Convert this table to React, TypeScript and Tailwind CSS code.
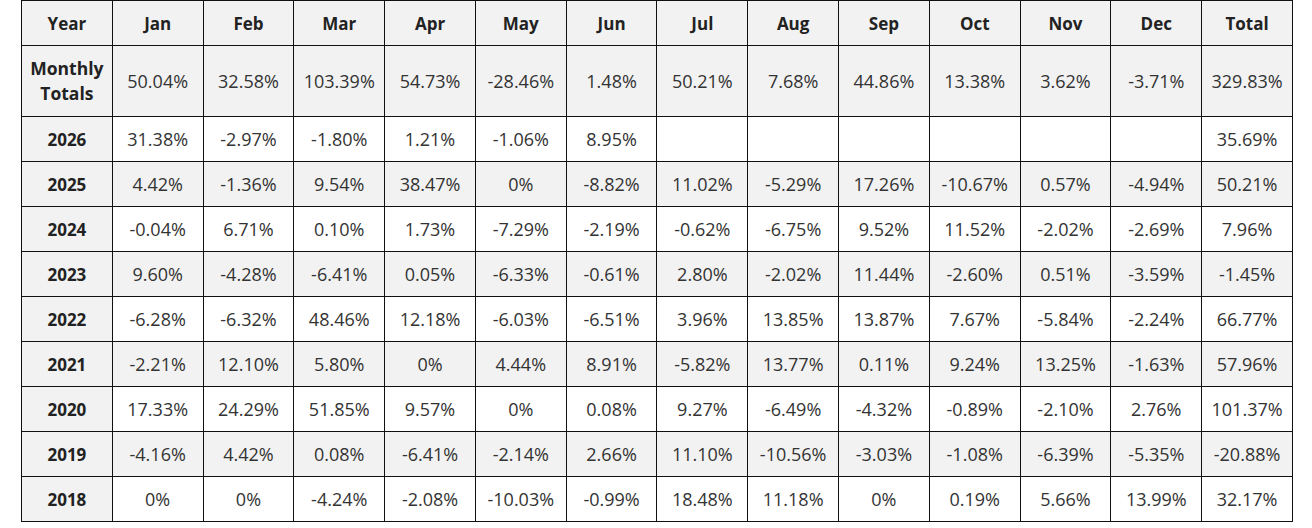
const months = ["Jan", "Feb", "Mar", "Apr", "May", "Jun", "Jul", "Aug", "Sep", "Oct", "Nov", "Dec"]

const totals = ["50.04%", "32.58%", "103.39%", "54.73%", "-28.46%", "1.48%", "50.21%", "7.68%", "44.86%", "13.38%", "3.62%", "-3.71%", "329.83%"]

const years: { year: string; values: string[] }[] = [
  { year: "2026", values: ["31.38%", "-2.97%", "-1.80%", "1.21%", "-1.06%", "8.95%", "", "", "", "", "", "", "35.69%"] },
  { year: "2025", values: ["4.42%", "-1.36%", "9.54%", "38.47%", "0%", "-8.82%", "11.02%", "-5.29%", "17.26%", "-10.67%", "0.57%", "-4.94%", "50.21%"] },
  { year: "2024", values: ["-0.04%", "6.71%", "0.10%", "1.73%", "-7.29%", "-2.19%", "-0.62%", "-6.75%", "9.52%", "11.52%", "-2.02%", "-2.69%", "7.96%"] },
  { year: "2023", values: ["9.60%", "-4.28%", "-6.41%", "0.05%", "-6.33%", "-0.61%", "2.80%", "-2.02%", "11.44%", "-2.60%", "0.51%", "-3.59%", "-1.45%"] },
  { year: "2022", values: ["-6.28%", "-6.32%", "48.46%", "12.18%", "-6.03%", "-6.51%", "3.96%", "13.85%", "13.87%", "7.67%", "-5.84%", "-2.24%", "66.77%"] },
  { year: "2021", values: ["-2.21%", "12.10%", "5.80%", "0%", "4.44%", "8.91%", "-5.82%", "13.77%", "0.11%", "9.24%", "13.25%", "-1.63%", "57.96%"] },
  { year: "2020", values: ["17.33%", "24.29%", "51.85%", "9.57%", "0%", "0.08%", "9.27%", "-6.49%", "-4.32%", "-0.89%", "-2.10%", "2.76%", "101.37%"] },
  { year: "2019", values: ["-4.16%", "4.42%", "0.08%", "-6.41%", "-2.14%", "2.66%", "11.10%", "-10.56%", "-3.03%", "-1.08%", "-6.39%", "-5.35%", "-20.88%"] },
  { year: "2018", values: ["0%", "0%", "-4.24%", "-2.08%", "-10.03%", "-0.99%", "18.48%", "11.18%", "0%", "0.19%", "5.66%", "13.99%", "32.17%"] },
]

export default function App() {
  return (
    <div className="w-[1312px] h-[528px] bg-white pl-[21px] font-['Open_Sans',sans-serif] text-[18px] leading-[25px]">
      <table className="w-[1272px] table-fixed border-collapse text-center">
        <thead>
          <tr className="h-[45px] bg-[#f2f2f2] text-[17px] text-[#222]">
            <th className="border border-[#111] px-2 font-bold">Year</th>
            {months.map((m) => (
              <th key={m} className="border border-[#111] px-2 font-bold">{m}</th>
            ))}
            <th className="border border-[#111] px-2 font-bold">Total</th>
          </tr>
        </thead>
        <tbody>
          <tr className="h-[71px] bg-[#f2f2f2] text-[#333]">
            <td className="border border-[#111] px-1 text-[17.5px] font-bold text-[#222]">Monthly Totals</td>
            {totals.map((v, i) => (
              <td key={i} className="border border-[#111] px-1">{v}</td>
            ))}
          </tr>
          {years.map((row, r) => (
            <tr key={row.year} className={`h-[45px] text-[#333] ${r % 2 === 1 ? "bg-[#f2f2f2]" : "bg-white"}`}>
              <td className="border border-[#111] bg-[#f2f2f2] px-2 text-[17px] font-bold text-[#222]">{row.year}</td>
              {row.values.map((v, i) => (
                <td key={i} className="border border-[#111] px-1">{v}</td>
              ))}
            </tr>
          ))}
        </tbody>
      </table>
    </div>
  )
}
